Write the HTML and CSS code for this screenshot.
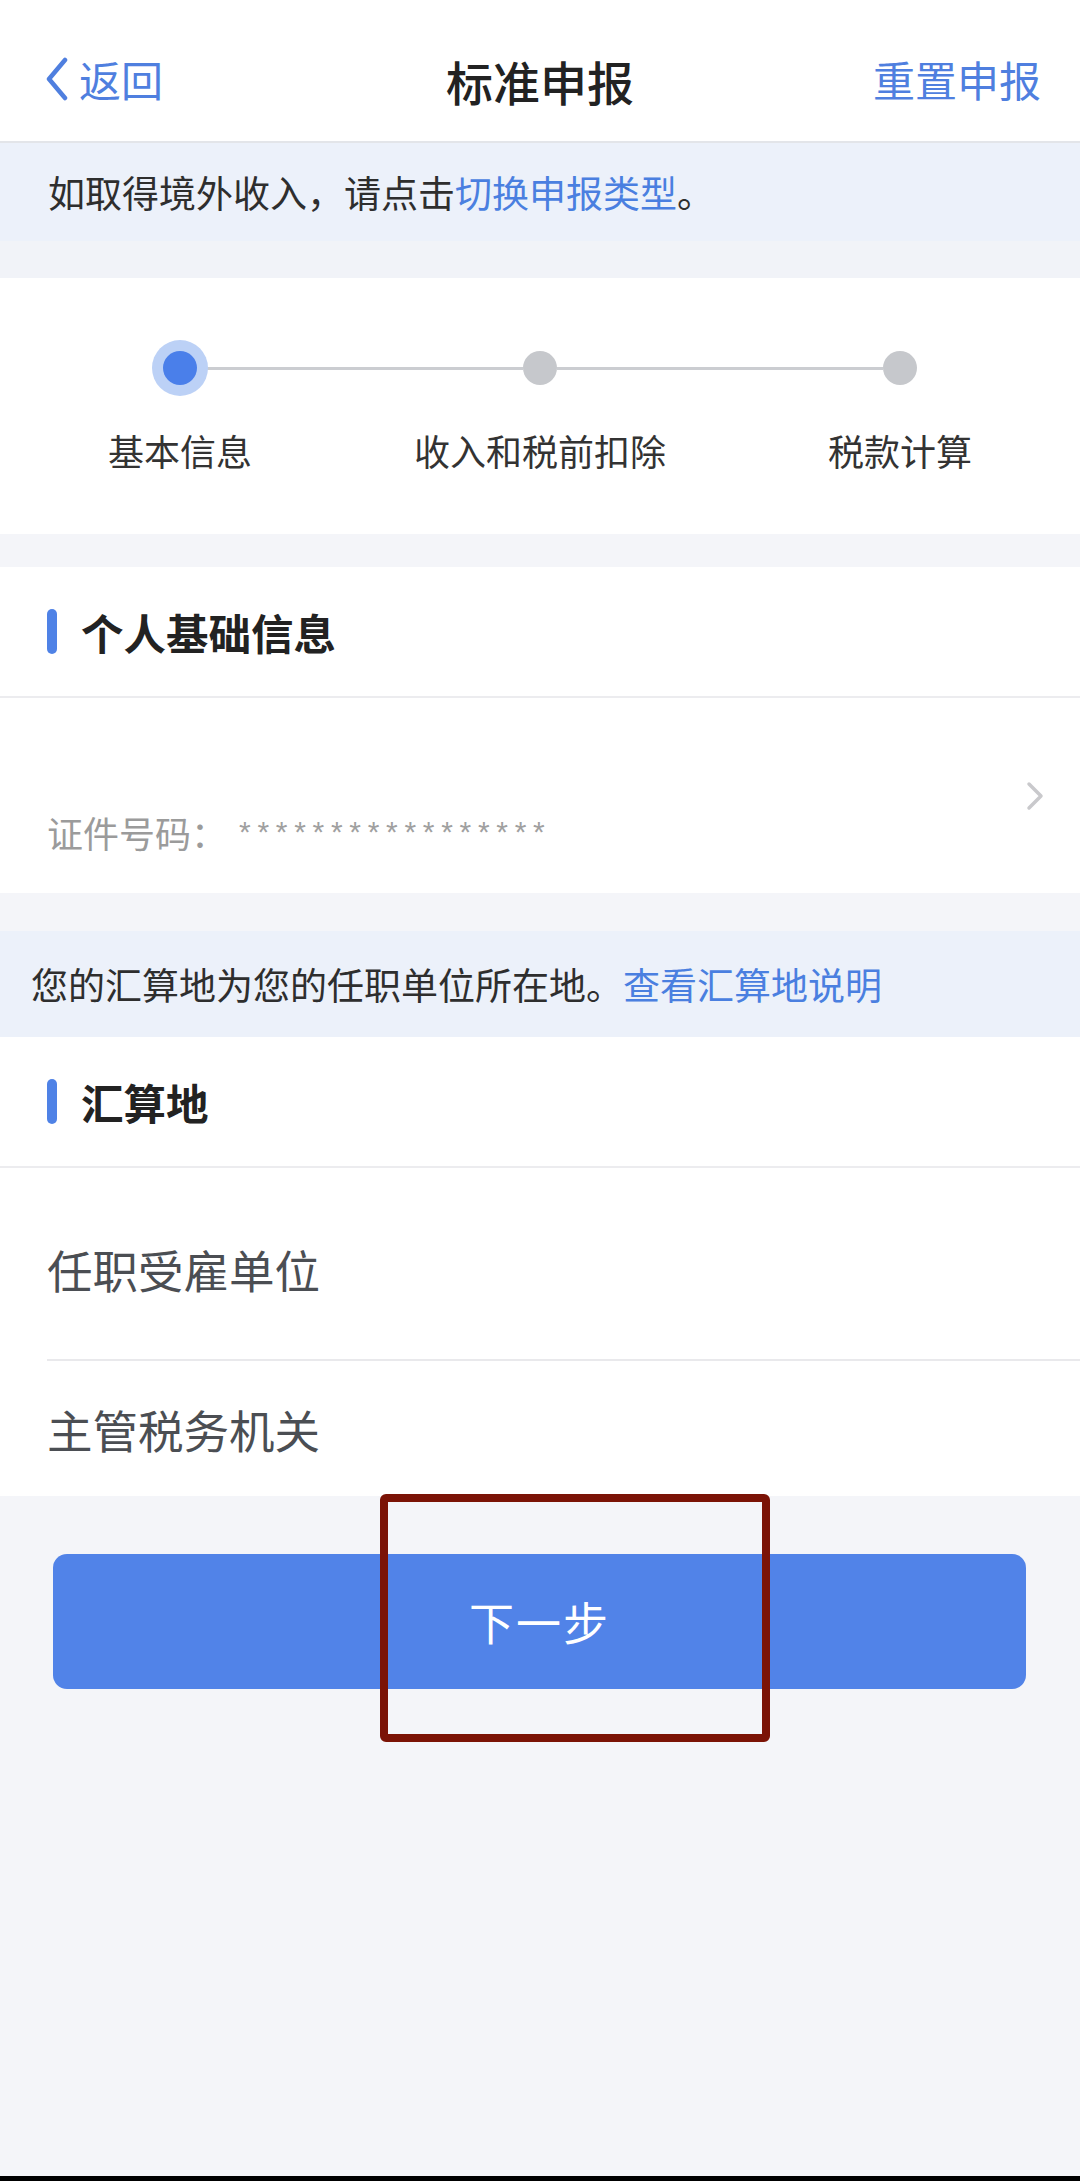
FILE: index.html
```html
<!DOCTYPE html>
<html lang="zh-CN">
<head>
    <meta charset="UTF-8">
    <meta name="viewport" content="width=device-width, initial-scale=1.0">
    <title>标准申报</title>
    <link rel="stylesheet" href="styles.css">
</head>
<body>
    <header class="navbar">
        <a class="nav-back" href="#">
            <svg width="24" height="44" viewBox="0 0 24 44"><polyline points="20,3 4,22 20,41" fill="none" stroke="#4f7fdf" stroke-width="4.5" stroke-linecap="round" stroke-linejoin="round"/></svg>
            <span>返回</span>
        </a>
        <h1>标准申报</h1>
        <a class="nav-action" href="#">重置申报</a>
    </header>

    <div class="notice notice-top">
        如取得境外收入，请点击<a href="#">切换申报类型</a>。
    </div>
    <div class="gap gap-top"></div>

    <section class="steps">
        <div class="track">
            <span class="dot active"><i></i></span>
            <span class="line"></span>
            <span class="dot"></span>
            <span class="line"></span>
            <span class="dot"></span>
        </div>
        <div class="labels">
            <span>基本信息</span>
            <span>收入和税前扣除</span>
            <span>税款计算</span>
        </div>
    </section>
    <div class="gap gap-mid"></div>

    <section class="card">
        <div class="card-title">个人基础信息</div>
        <div class="id-row">
            <div class="id-text">证件号码：<span class="stars">*****************</span></div>
            <svg class="chevron" width="20" height="30" viewBox="0 0 20 30"><polyline points="4,3 16,15 4,27" fill="none" stroke="#c9c9cc" stroke-width="3.5" stroke-linecap="round" stroke-linejoin="round"/></svg>
        </div>
    </section>

    <div class="gap gap-notice"></div>
    <div class="notice notice-area">
        您的汇算地为您的任职单位所在地。<a href="#">查看汇算地说明</a>
    </div>

    <section class="card">
        <div class="card-title">汇算地</div>
        <div class="field first">任职受雇单位</div>
        <div class="field">主管税务机关</div>
    </section>

    <div class="actions">
        <button type="button" class="btn">下一步</button>
        <div class="mark"></div>
    </div>

    <div class="home-bar"></div>
</body>
</html>
```

FILE: styles.css
```css
body {
    margin: 0;
    min-height: 2181px;
    display: flex;
    flex-direction: column;
    background-color: #f4f5f9;
    font-family: "Noto Sans CJK SC", "Noto Sans", sans-serif;
    color: #333;
}
a {
    text-decoration: none;
    color: #4a7fe0;
}

/* barre du haut */
.navbar {
    height: 125px;
    display: flex;
    align-items: center;
    justify-content: space-between;
    padding: 16px 39px 0 45px;
    background-color: #fff;
    border-bottom: 2px solid #e3e5e9;
    position: relative;
}
.nav-back {
    display: flex;
    align-items: center;
    gap: 10px;
    font-size: 42px;
    line-height: 50px;
    color: #4f7fdf;
}
.navbar h1 {
    margin: 0;
    font-size: 47px;
    font-weight: 500;
    color: #222;
    line-height: 56px;
    position: absolute;
    left: 0;
    right: 0;
    top: 53px;
    text-align: center;
    pointer-events: none;
}
.nav-action {
    font-size: 42px;
    line-height: 50px;
    color: #4f7fdf;
}

.notice {
    background-color: #ecf1fa;
    font-size: 37px;
    color: #2e2e2e;
    display: flex;
    align-items: center;
}
.notice-top {
    height: 98px;
    padding-left: 48px;
}
.notice-area {
    height: 106px;
    padding-left: 31px;
}
.gap-top { height: 37px; background-color: #f1f3f8; }
.gap-mid { height: 33px; }
.gap-notice { height: 38px; }

/* étapes */
.steps {
    background-color: #fff;
    padding: 62px 0 59px;
}
.track {
    display: flex;
    align-items: center;
    padding: 0 163px 0 152px;
}
.dot {
    width: 34px;
    height: 34px;
    border-radius: 50%;
    background-color: #c6c8cc;
    position: relative;
    z-index: 1;
}
.dot.active {
    width: 56px;
    height: 56px;
    margin-right: -11px;
    background-color: #bcd1f6;
    display: flex;
    align-items: center;
    justify-content: center;
}
.dot.active i {
    width: 34px;
    height: 34px;
    border-radius: 50%;
    background-color: #4a7fea;
}
.line {
    flex: 1;
    height: 3px;
    background-color: #cbcdd1;
}
.labels {
    display: grid;
    grid-template-columns: repeat(3, 1fr);
    margin-top: 29px;
    text-align: center;
    font-size: 36px;
    line-height: 50px;
    color: #333;
}

/* cartes */
.card {
    background-color: #fff;
}
.card-title {
    height: 129px;
    display: flex;
    align-items: center;
    padding-left: 47px;
    font-size: 42.5px;
    font-weight: 700;
    color: #222;
    border-bottom: 2px solid #ececef;
}
.card-title::before {
    content: "";
    width: 10px;
    height: 45px;
    border-radius: 5px;
    background-color: #4f82e6;
    margin-right: 24px;
}
.id-row {
    height: 195px;
    display: flex;
    align-items: center;
    justify-content: space-between;
    padding: 0 47px;
}
.id-text {
    margin-top: 72px;
    font-size: 36px;
    line-height: 50px;
    color: #9b9b9b;
}
.stars {
    margin-left: 12px;
    font-family: "Liberation Sans", sans-serif;
    font-size: 30px;
    letter-spacing: 6.7px;
    vertical-align: 6px;
    color: #a0a0a0;
}
.chevron {
    margin-right: -12px;
}
.field {
    margin-left: 47px;
    height: 135px;
    display: flex;
    align-items: center;
    font-size: 45.5px;
    color: #4b4e53;
}
.field.first {
    height: 193px;
    padding-top: 10px;
    box-sizing: border-box;
    border-bottom: 2px solid #e9e9ec;
}

/* bouton */
.actions {
    position: relative;
    padding: 58px 54px 0 53px;
}
.btn {
    display: block;
    width: 100%;
    height: 135px;
    border: none;
    border-radius: 14px;
    background-color: #5183e8;
    color: #fff;
    font-family: inherit;
    font-size: 45px;
    letter-spacing: 2px;
    cursor: pointer;
}
.mark {
    position: absolute;
    left: 380px;
    top: -2px;
    width: 374px;
    height: 232px;
    border: 8px solid #7b1306;
    border-radius: 6px;
}
.home-bar {
    margin-top: auto;
    height: 5px;
    background-color: #000;
}
```
